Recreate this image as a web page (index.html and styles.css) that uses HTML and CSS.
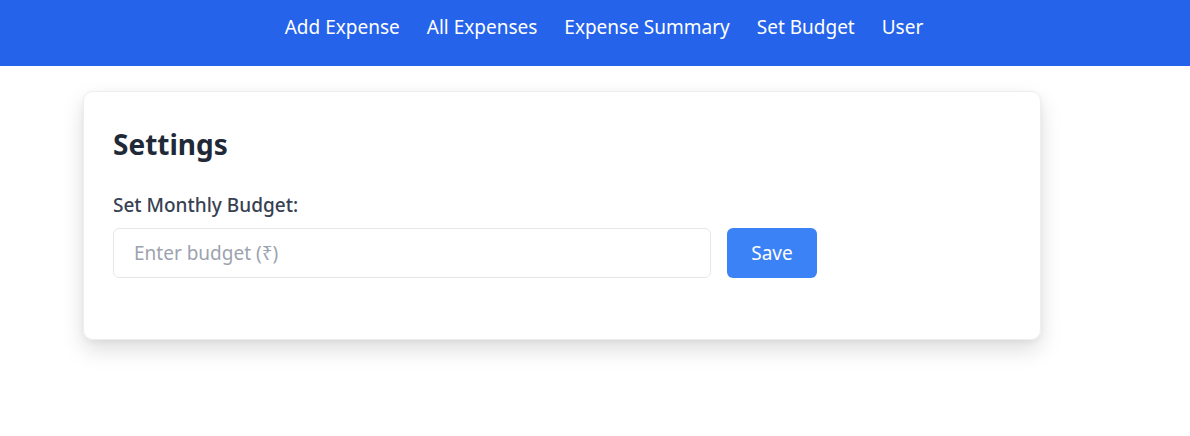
FILE: index.html
```html
<!DOCTYPE html>
<html>
<head>
<meta charset="utf-8">
<link rel="stylesheet" href="styles.css">
</head>
<body>
<nav class="navbar">
  <a class="nav-link">Add Expense</a>
  <a class="nav-link">All Expenses</a>
  <a class="nav-link">Expense Summary</a>
  <a class="nav-link">Set Budget</a>
  <a class="nav-link">User</a>
</nav>
<main class="container">
  <section class="card">
    <h2 class="title">Settings</h2>
    <label class="label">Set Monthly Budget:</label>
    <div class="row">
      <input class="input" type="text" placeholder="Enter budget (₹)">
      <button class="btn">Save</button>
    </div>
  </section>
</main>
</body>
</html>
```

FILE: styles.css
```css
* { box-sizing: border-box; }
html, body { min-height: 100%; }
body {
  margin: 0;
  min-height: 100vh;
  font-family: "Noto Sans", "Open Sans", sans-serif;
  background: #ffffff;
}
.navbar {
  height: 66px;
  background: #2563eb;
  display: flex;
  justify-content: center;
  align-items: center;
  gap: 27px;
  padding-left: 18px;
  padding-bottom: 12px;
}
.nav-link {
  color: #ffffff;
  font-size: 19px;
}
.container {
  width: 1024px;
  margin: 25px auto 0;
  padding-bottom: 60px;
}
.card {
  width: 958px;
  border: 1px solid #eceef1;
  border-radius: 10px;
  box-shadow: 0 10px 22px rgba(0,0,0,0.13), 0 2px 6px rgba(0,0,0,0.05);
  padding: 30px 29px 61px;
}
.title {
  margin: 0 0 26px;
  font-size: 28px;
  font-weight: 700;
  color: #1f2937;
  line-height: 44px;
}
.label {
  display: block;
  font-size: 19px;
  font-weight: 500;
  color: #374151;
  margin-bottom: 9px;
  line-height: 27px;
}
.row {
  display: flex;
  gap: 16px;
}
.input {
  width: 598px;
  height: 50px;
  border: 1px solid #e5e7eb;
  border-radius: 6px;
  padding: 0 20px;
  font-family: inherit;
  font-size: 19px;
}
.input::placeholder { color: #9ca3af; }
.btn {
  width: 90px;
  height: 50px;
  border: none;
  border-radius: 6px;
  background: #3b82f6;
  color: #ffffff;
  font-family: inherit;
  font-size: 19px;
}
```
